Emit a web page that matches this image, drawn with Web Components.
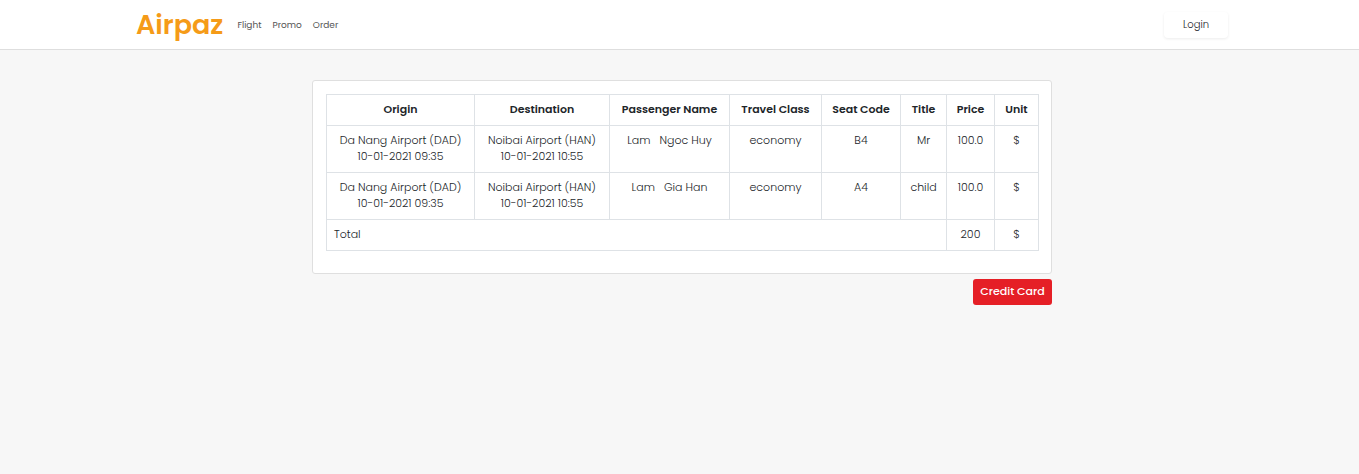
<!DOCTYPE html>
<html lang="en">
<head>
<meta charset="utf-8">
<meta name="viewport" content="width=device-width, initial-scale=1">
<title>Airpaz</title>
<style>
html { background: #f7f7f7; }
body { margin: 0; font: 300 11px/16px Poppins, Inter, "Open Sans", sans-serif; color: #212529; }
</style>
</head>
<body>
<site-header>
  <nav-link href="#flight">Flight</nav-link>
  <nav-link href="#promo">Promo</nav-link>
  <nav-link href="#order">Order</nav-link>
</site-header>
<order-page>
  <ticket-table></ticket-table>
  <pay-button slot="actions">Credit Card</pay-button>
</order-page>
<script>
class BaseElement extends HTMLElement {
  constructor() {
    super();
    this.attachShadow({ mode: 'open' }).innerHTML = this.constructor.markup;
  }
}

class NavLink extends BaseElement {
  static markup = `
    <style>
      :host { display: block; }
      a { color: #555; text-decoration: none; }
    </style>
    <a><slot></slot></a>`;
  connectedCallback() {
    this.shadowRoot.querySelector('a').href = this.getAttribute('href');
  }
}
customElements.define('nav-link', NavLink);

class SiteHeader extends BaseElement {
  static markup = `
    <style>
      :host { display: block; background: #fff; border-bottom: 1px solid #dedede; padding-left: 5px; }
      .bar { display: flex; align-items: center; max-width: 1092px; height: 49px; margin: 0 auto; }
      .logo { color: #f59b18; font-size: 27px; line-height: 42px; font-weight: 600; text-decoration: none; }
      nav { display: flex; gap: 11px; margin-left: 14px; font-size: 9px; font-weight: 400; }
      button { margin-left: auto; width: 64px; height: 26px; padding: 0; border: 0; border-radius: 4px;
        background: #fff; color: #212529; font: inherit; font-size: 10px; box-shadow: 0 1px 3px rgba(0,0,0,.08); }
    </style>
    <header class="bar">
      <a class="logo" href="#home">Airpaz</a>
      <nav><slot></slot></nav>
      <button type="button">Login</button>
    </header>`;
}
customElements.define('site-header', SiteHeader);

class OrderPage extends BaseElement {
  static markup = `
    <style>
      :host { display: block; padding: 30px 0 30px 5px; }
      main { max-width: 740px; margin: 0 auto; }
      .card { background: #fff; border: 1px solid #dfdfdf; border-radius: 3px; padding: 13px 12px 22px 13px; }
      .actions { display: flex; justify-content: flex-end; margin-top: 5px; }
    </style>
    <main>
      <section class="card"><slot></slot></section>
      <div class="actions"><slot name="actions"></slot></div>
    </main>`;
}
customElements.define('order-page', OrderPage);

class PayButton extends BaseElement {
  static markup = `
    <style>
      :host { display: block; }
      button { display: block; width: 79px; height: 26px; padding: 0 0 2px; border: 0; border-radius: 3px;
        background: #e51f26; color: #fff; font: inherit; font-weight: 500; }
    </style>
    <button type="button"><slot></slot></button>`;
}
customElements.define('pay-button', PayButton);

class TicketTable extends BaseElement {
  static markup = `
    <style>
      :host { display: block; }
      table { width: 100%; table-layout: fixed; border-collapse: collapse; }
      th, td { border: 1px solid #dee2e6; padding: 6px 0 8px; text-align: center; vertical-align: top; white-space: nowrap; }
      th { font-weight: 600; }
      .total { text-align: left; padding-left: 7px; font-weight: inherit; }
      .w1 { width: 148px; } .w2 { width: 135px; } .w3 { width: 120px; } .w4 { width: 92px; }
      .w5 { width: 79px; } .w6 { width: 46px; } .w7 { width: 48px; } .w8 { width: 44px; }
    </style>
    <table>
      <colgroup><col class="w1"><col class="w2"><col class="w3"><col class="w4"><col class="w5"><col class="w6"><col class="w7"><col class="w8"></colgroup>
      <thead>
        <tr><th>Origin</th><th>Destination</th><th>Passenger Name</th><th>Travel Class</th><th>Seat Code</th><th>Title</th><th>Price</th><th>Unit</th></tr>
      </thead>
      <tbody>
        <tr><td>Da Nang Airport (DAD)<br>10-01-2021 09:35</td><td>Noibai Airport (HAN)<br>10-01-2021 10:55</td><td>Lam &nbsp; Ngoc Huy</td><td>economy</td><td>B4</td><td>Mr</td><td>100.0</td><td>$</td></tr>
        <tr><td>Da Nang Airport (DAD)<br>10-01-2021 09:35</td><td>Noibai Airport (HAN)<br>10-01-2021 10:55</td><td>Lam &nbsp; Gia Han</td><td>economy</td><td>A4</td><td>child</td><td>100.0</td><td>$</td></tr>
      </tbody>
      <tfoot>
        <tr><th class="total" colspan="6" scope="row">Total</th><td>200</td><td>$</td></tr>
      </tfoot>
    </table>`;
}
customElements.define('ticket-table', TicketTable);
</script>
</body>
</html>
